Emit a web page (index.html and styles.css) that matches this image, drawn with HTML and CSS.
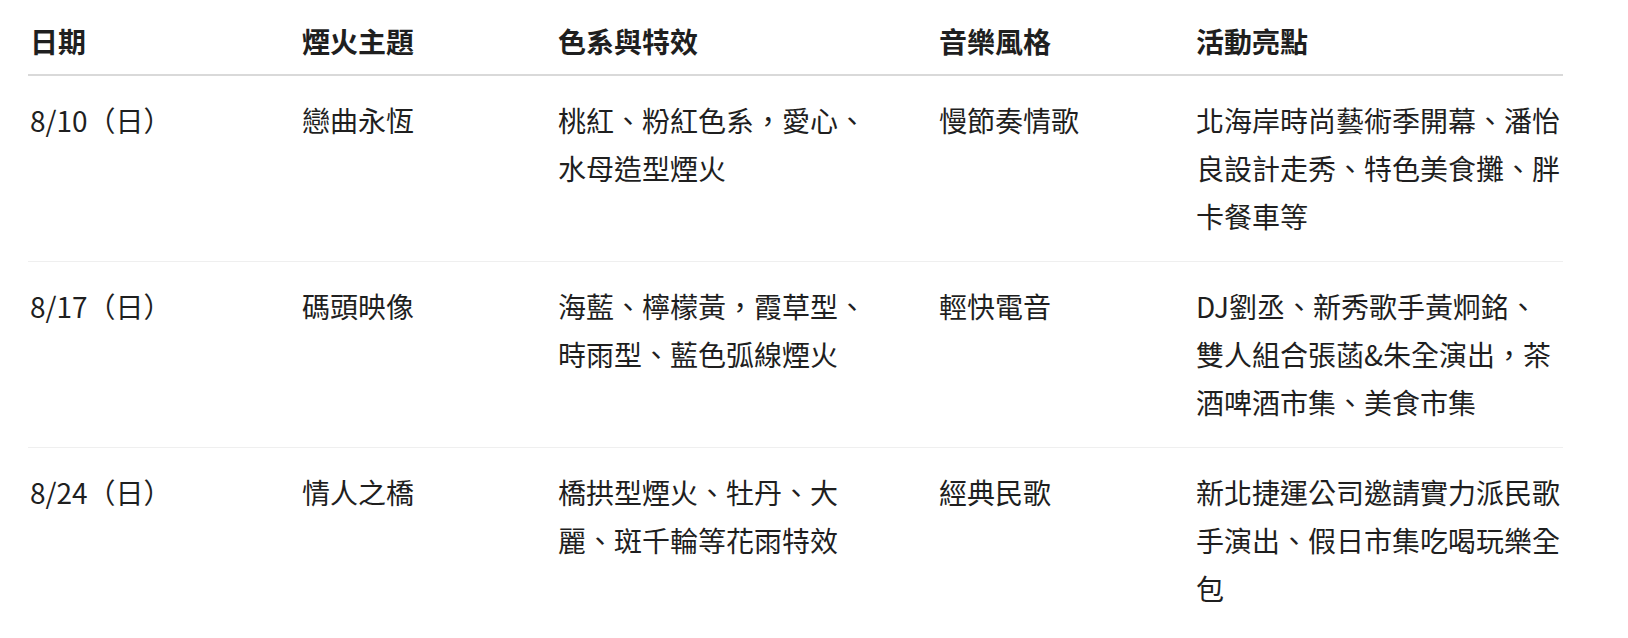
FILE: index.html
```html
<!DOCTYPE html>
<html lang="zh-Hant">
<head>
<meta charset="utf-8">
<title>煙火活動</title>
<link rel="stylesheet" href="styles.css">
</head>
<body>
<div class="wrap">
<table class="fw-table">
  <colgroup>
    <col class="c1"><col class="c2"><col class="c3"><col class="c4"><col class="c5">
  </colgroup>
  <thead>
    <tr>
      <th>日期</th>
      <th>煙火主題</th>
      <th>色系與特效</th>
      <th>音樂風格</th>
      <th>活動亮點</th>
    </tr>
  </thead>
  <tbody>
    <tr>
      <td>8/10（日）</td>
      <td>戀曲永恆</td>
      <td>桃紅、粉紅色系，愛心、水母造型煙火</td>
      <td>慢節奏情歌</td>
      <td>北海岸時尚藝術季開幕、潘怡良設計走秀、特色美食攤、胖卡餐車等</td>
    </tr>
    <tr>
      <td>8/17（日）</td>
      <td>碼頭映像</td>
      <td>海藍、檸檬黃，霞草型、時雨型、藍色弧線煙火</td>
      <td>輕快電音</td>
      <td>DJ劉丞、新秀歌手黃炯銘、雙人組合張菡&amp;朱全演出，茶酒啤酒市集、美食市集</td>
    </tr>
    <tr>
      <td>8/24（日）</td>
      <td>情人之橋</td>
      <td>橋拱型煙火、牡丹、大麗、斑千輪等花雨特效</td>
      <td>經典民歌</td>
      <td>新北捷運公司邀請實力派民歌手演出、假日市集吃喝玩樂全包</td>
    </tr>
  </tbody>
</table>
</div>
</body>
</html>
```
FILE: styles.css
```css
html, body {
  margin: 0;
  padding: 0;
  background: #ffffff;
}
body {
  font-family: "Noto Sans CJK TC", "Noto Sans", sans-serif;
  color: #1f1f1f;
}
.wrap {
  padding: 0 0 0 28px;
}
.fw-table {
  width: 1535px;
  table-layout: fixed;
  border-collapse: collapse;
  font-size: 28px;
  line-height: 48px;
}
.c1 { width: 272px; }
.c2 { width: 256px; }
.c3 { width: 381px; }
.c4 { width: 257px; }
.c5 { width: 369px; }
.fw-table th {
  text-align: left;
  font-weight: 700;
  padding: 17px 48px 9px 2px;
  border-bottom: 2px solid #d9d9d9;
  vertical-align: top;
}
.fw-table td {
  padding: 20px 48px 21px 2px;
  vertical-align: top;
  border-bottom: 1px solid #efefef;
}
.fw-table td:last-child,
.fw-table th:last-child {
  padding-right: 3px;
}
.fw-table tbody tr:last-child td {
  border-bottom: none;
}
```
